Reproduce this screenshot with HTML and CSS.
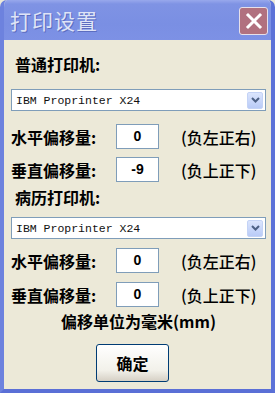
FILE: index.html
```html
<!DOCTYPE html>
<html>

<head>
    <title>打印设置</title>
    <link rel="stylesheet" href="styles.css">
</head>

<body>
    <div class="window">
        <div class="titlebar">
            <span class="title">打印设置</span>
            <a class="close" href="#none">
                <svg width="18" height="18" viewBox="0 0 18 18">
                    <path d="M3 3 L15 15 M15 3 L3 15" stroke="#fff" stroke-width="3" stroke-linecap="square" />
                </svg>
            </a>
        </div>
        <div class="content">
            <!-- 普通打印机 -->
            <div class="heading h1">普通打印机:</div>
            <div class="select s1">
                <span class="sel-text">IBM Proprinter X24</span>
                <span class="sel-btn">
                    <svg width="9" height="6" viewBox="0 0 9 6">
                        <path d="M1 1 L4.5 4.5 L8 1" stroke="#4d6185" stroke-width="2" fill="none" />
                    </svg>
                </span>
            </div>
            <div class="row r1">
                <span class="label">水平偏移量:</span>
                <span class="input">0</span>
                <span class="hint">(负左正右)</span>
            </div>
            <div class="row r2">
                <span class="label">垂直偏移量:</span>
                <span class="input">-9</span>
                <span class="hint">(负上正下)</span>
            </div>
            <!-- 病历打印机 -->
            <div class="heading h2">病历打印机:</div>
            <div class="select s2">
                <span class="sel-text">IBM Proprinter X24</span>
                <span class="sel-btn">
                    <svg width="9" height="6" viewBox="0 0 9 6">
                        <path d="M1 1 L4.5 4.5 L8 1" stroke="#4d6185" stroke-width="2" fill="none" />
                    </svg>
                </span>
            </div>
            <div class="row r3">
                <span class="label">水平偏移量:</span>
                <span class="input">0</span>
                <span class="hint">(负左正右)</span>
            </div>
            <div class="row r4">
                <span class="label">垂直偏移量:</span>
                <span class="input">0</span>
                <span class="hint">(负上正下)</span>
            </div>
            <div class="note">偏移单位为毫米(mm)</div>
            <div class="btn-wrap">
                <button class="ok">确定</button>
            </div>
        </div>
    </div>
</body>

</html>
```

FILE: styles.css
```css
html,
body {
    margin: 0;
    padding: 0;
    background: #ece9d8;
}

.window {
    width: 275px;
    height: 393px;
    box-sizing: border-box;
    background: #ece9d8;
    border-left: 4px solid #6d82de;
    border-right: 4px solid #5c72d8;
    border-bottom: 4px solid #5a6fd6;
    border-radius: 7px 7px 0 0;
    font-family: "Noto Sans CJK SC", sans-serif;
    color: #000;
    overflow: hidden;
}

.titlebar {
    height: 40px;
    margin: 0 -4px;
    padding: 0 7px 0 10px;
    display: flex;
    align-items: center;
    justify-content: space-between;
    background: linear-gradient(#98a8ec 0px, #7f93e4 4px, #7a8fe3 60%, #7d91e5 100%);
    border-radius: 7px 7px 0 0;
}

.title {
    font-size: 21px;
    color: #dfe4f7;
    letter-spacing: 1px;
    text-shadow: 1px 1px 0 #5b6cc0;
}

.close {
    width: 29px;
    height: 28px;
    box-sizing: border-box;
    margin-top: 1px;
    border: 1px solid #e6e0ea;
    border-radius: 3px;
    background: #b1717f;
    display: flex;
    align-items: center;
    justify-content: center;
}

.content {
    padding: 0 5px 0 7px;
}

.heading {
    height: 24px;
    line-height: 24px;
    font-size: 16px;
    font-weight: bold;
    padding-left: 4px;
}

.h1 {
    margin-top: 12px;
}

.h2 {
    margin-top: 3px;
}

.select {
    height: 22px;
    box-sizing: border-box;
    border: 1px solid #7f9db9;
    background: #fff;
    display: flex;
    align-items: center;
    justify-content: space-between;
    padding: 0 2px 0 4px;
}

.s1 {
    margin-top: 13px;
}

.s2 {
    margin-top: 8px;
}

.sel-text {
    font-family: "Liberation Mono", monospace;
    font-size: 11.5px;
    color: #111;
}

.sel-btn {
    width: 16px;
    height: 17px;
    box-sizing: border-box;
    border: 1px solid #c4d3f6;
    border-radius: 2px;
    background: linear-gradient(#dbe5fd, #b9cbf7);
    display: flex;
    align-items: center;
    justify-content: center;
}

.row {
    height: 25px;
    display: flex;
    align-items: center;
    font-size: 16px;
}

.r1 {
    margin-top: 13px;
}

.r2 {
    margin-top: 8px;
}

.r3 {
    margin-top: 9px;
}

.r4 {
    margin-top: 9px;
}

.label {
    width: 105px;
    font-weight: bold;
}

.input {
    width: 43px;
    height: 25px;
    box-sizing: border-box;
    border: 1px solid #7f9db9;
    background: #fff;
    text-align: center;
    line-height: 23px;
    font-family: "Liberation Sans", sans-serif;
    font-weight: bold;
    font-size: 14px;
}

.hint {
    margin-left: 22px;
    font-size: 16px;
    font-weight: 500;
}

.note {
    margin-top: 4px;
    height: 20px;
    line-height: 20px;
    text-align: center;
    font-size: 16px;
    font-weight: bold;
}

.btn-wrap {
    margin-top: 13px;
    display: flex;
    padding-left: 85px;
}

.ok {
    width: 73px;
    height: 38px;
    border: 1px solid #003c74;
    border-radius: 3px;
    background: linear-gradient(#ffffff, #f2f1ea 70%, #d6d0c5);
    font-family: "Noto Sans CJK SC", sans-serif;
    font-size: 16px;
    font-weight: bold;
    color: #000;
    padding: 0;
}
```
